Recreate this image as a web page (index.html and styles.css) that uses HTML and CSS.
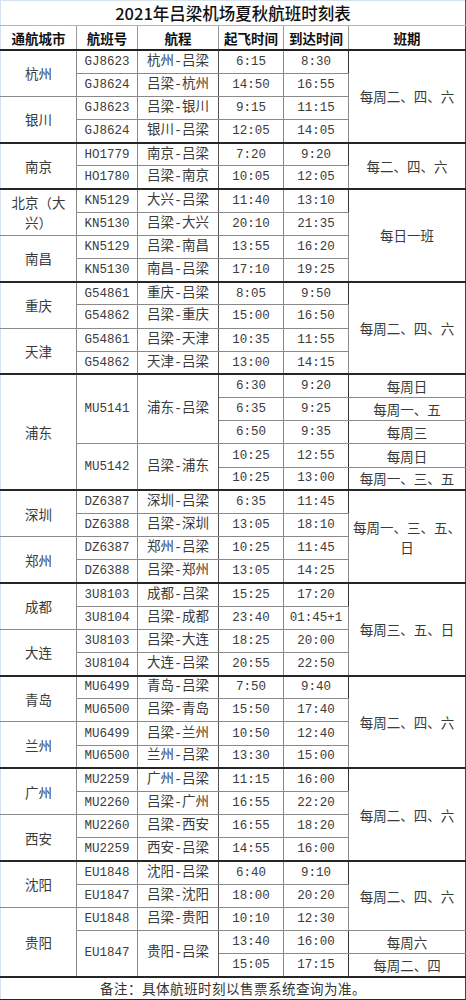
FILE: index.html
```html
<!DOCTYPE html>
<html lang="zh-CN">
<head>
<meta charset="utf-8">
<title>2021年吕梁机场夏秋航班时刻表</title>
<link rel="stylesheet" href="styles.css">
</head>
<body>
<table class="tt">
  <colgroup>
    <col class="c-city"><col class="c-no"><col class="c-route"><col class="c-dep"><col class="c-arr"><col class="c-sch">
  </colgroup>
  <thead>
    <tr class="title"><th colspan="6">2021年吕梁机场夏秋航班时刻表</th></tr>
    <tr class="head"><th>通航城市</th><th>航班号</th><th>航程</th><th>起飞时间</th><th>到达时间</th><th>班期</th></tr>
  </thead>
  <tbody>
    <tr class="gs"><td class="city" rowspan="2">杭州</td><td class="no">GJ8623</td><td class="rt">杭州-吕梁</td><td class="tm">6:15</td><td class="tm">8:30</td><td class="sch" rowspan="4">每周二、四、六</td></tr>
    <tr class="in"><td class="no">GJ8624</td><td class="rt">吕梁-杭州</td><td class="tm">14:50</td><td class="tm">16:55</td></tr>
    <tr class="cs"><td class="city" rowspan="2">银川</td><td class="no">GJ8623</td><td class="rt">吕梁-银川</td><td class="tm">9:15</td><td class="tm">11:15</td></tr>
    <tr class="in"><td class="no">GJ8624</td><td class="rt">银川-吕梁</td><td class="tm">12:05</td><td class="tm">14:05</td></tr>

    <tr class="gs"><td class="city" rowspan="2">南京</td><td class="no">HO1779</td><td class="rt">南京-吕梁</td><td class="tm">7:20</td><td class="tm">9:20</td><td class="sch" rowspan="2">每二、四、六</td></tr>
    <tr class="in"><td class="no">HO1780</td><td class="rt">吕梁-南京</td><td class="tm">10:05</td><td class="tm">12:05</td></tr>

    <tr class="gs"><td class="city two" rowspan="2">北京（大<br>兴）</td><td class="no">KN5129</td><td class="rt">大兴-吕梁</td><td class="tm">11:40</td><td class="tm">13:10</td><td class="sch" rowspan="4">每日一班</td></tr>
    <tr class="in"><td class="no">KN5130</td><td class="rt">吕梁-大兴</td><td class="tm">20:10</td><td class="tm">21:35</td></tr>
    <tr class="cs"><td class="city" rowspan="2">南昌</td><td class="no">KN5129</td><td class="rt">吕梁-南昌</td><td class="tm">13:55</td><td class="tm">16:20</td></tr>
    <tr class="in"><td class="no">KN5130</td><td class="rt">南昌-吕梁</td><td class="tm">17:10</td><td class="tm">19:25</td></tr>

    <tr class="gs"><td class="city" rowspan="2">重庆</td><td class="no">G54861</td><td class="rt">重庆-吕梁</td><td class="tm">8:05</td><td class="tm">9:50</td><td class="sch" rowspan="4">每周二、四、六</td></tr>
    <tr class="in"><td class="no">G54862</td><td class="rt">吕梁-重庆</td><td class="tm">15:00</td><td class="tm">16:50</td></tr>
    <tr class="cs"><td class="city" rowspan="2">天津</td><td class="no">G54861</td><td class="rt">吕梁-天津</td><td class="tm">10:35</td><td class="tm">11:55</td></tr>
    <tr class="in"><td class="no">G54862</td><td class="rt">天津-吕梁</td><td class="tm">13:00</td><td class="tm">14:15</td></tr>

    <tr class="gs"><td class="city" rowspan="5">浦东</td><td class="no" rowspan="3">MU5141</td><td class="rt" rowspan="3">浦东-吕梁</td><td class="tm">6:30</td><td class="tm">9:20</td><td class="sch">每周日</td></tr>
    <tr class="in"><td class="tm">6:35</td><td class="tm">9:25</td><td class="sch">每周一、五</td></tr>
    <tr class="in"><td class="tm">6:50</td><td class="tm">9:35</td><td class="sch">每周三</td></tr>
    <tr class="cs2"><td class="no" rowspan="2">MU5142</td><td class="rt" rowspan="2">吕梁-浦东</td><td class="tm">10:25</td><td class="tm">12:55</td><td class="sch">每周日</td></tr>
    <tr class="in"><td class="tm">10:25</td><td class="tm">13:00</td><td class="sch">每周一、三、五</td></tr>

    <tr class="gs"><td class="city" rowspan="2">深圳</td><td class="no">DZ6387</td><td class="rt">深圳-吕梁</td><td class="tm">6:35</td><td class="tm">11:45</td><td class="sch two" rowspan="4">每周一、三、五、<br>日</td></tr>
    <tr class="in"><td class="no">DZ6388</td><td class="rt">吕梁-深圳</td><td class="tm">13:05</td><td class="tm">18:10</td></tr>
    <tr class="cs"><td class="city" rowspan="2">郑州</td><td class="no">DZ6387</td><td class="rt">郑州-吕梁</td><td class="tm">10:25</td><td class="tm">11:45</td></tr>
    <tr class="in"><td class="no">DZ6388</td><td class="rt">吕梁-郑州</td><td class="tm">13:05</td><td class="tm">14:25</td></tr>

    <tr class="gs"><td class="city" rowspan="2">成都</td><td class="no">3U8103</td><td class="rt">成都-吕梁</td><td class="tm">15:25</td><td class="tm">17:20</td><td class="sch" rowspan="4">每周三、五、日</td></tr>
    <tr class="in"><td class="no">3U8104</td><td class="rt">吕梁-成都</td><td class="tm">23:40</td><td class="tm">01:45+1</td></tr>
    <tr class="cs"><td class="city" rowspan="2">大连</td><td class="no">3U8103</td><td class="rt">吕梁-大连</td><td class="tm">18:25</td><td class="tm">20:00</td></tr>
    <tr class="in"><td class="no">3U8104</td><td class="rt">大连-吕梁</td><td class="tm">20:55</td><td class="tm">22:50</td></tr>

    <tr class="gs"><td class="city" rowspan="2">青岛</td><td class="no">MU6499</td><td class="rt">青岛-吕梁</td><td class="tm">7:50</td><td class="tm">9:40</td><td class="sch" rowspan="4">每周二、四、六</td></tr>
    <tr class="in"><td class="no">MU6500</td><td class="rt">吕梁-青岛</td><td class="tm">15:50</td><td class="tm">17:40</td></tr>
    <tr class="cs"><td class="city" rowspan="2">兰州</td><td class="no">MU6499</td><td class="rt">吕梁-兰州</td><td class="tm">10:50</td><td class="tm">12:40</td></tr>
    <tr class="in"><td class="no">MU6500</td><td class="rt">兰州-吕梁</td><td class="tm">13:30</td><td class="tm">15:00</td></tr>

    <tr class="gs"><td class="city" rowspan="2">广州</td><td class="no">MU2259</td><td class="rt">广州-吕梁</td><td class="tm">11:15</td><td class="tm">16:00</td><td class="sch" rowspan="4">每周二、四、六</td></tr>
    <tr class="in"><td class="no">MU2260</td><td class="rt">吕梁-广州</td><td class="tm">16:55</td><td class="tm">22:20</td></tr>
    <tr class="cs"><td class="city" rowspan="2">西安</td><td class="no">MU2260</td><td class="rt">吕梁-西安</td><td class="tm">16:55</td><td class="tm">18:20</td></tr>
    <tr class="in"><td class="no">MU2259</td><td class="rt">西安-吕梁</td><td class="tm">14:55</td><td class="tm">16:00</td></tr>

    <tr class="gs"><td class="city" rowspan="2">沈阳</td><td class="no">EU1848</td><td class="rt">沈阳-吕梁</td><td class="tm">6:40</td><td class="tm">9:10</td><td class="sch" rowspan="3">每周二、四、六</td></tr>
    <tr class="in"><td class="no">EU1847</td><td class="rt">吕梁-沈阳</td><td class="tm">18:00</td><td class="tm">20:20</td></tr>
    <tr class="cs"><td class="city" rowspan="3">贵阳</td><td class="no">EU1848</td><td class="rt">吕梁-贵阳</td><td class="tm">10:10</td><td class="tm">12:30</td></tr>
    <tr class="cs2"><td class="no" rowspan="2">EU1847</td><td class="rt" rowspan="2">贵阳-吕梁</td><td class="tm">13:40</td><td class="tm">16:00</td><td class="sch">每周六</td></tr>
    <tr class="in"><td class="tm">15:05</td><td class="tm">17:15</td><td class="sch">每周二、四</td></tr>

    <tr class="note"><td colspan="6">备注：具体航班时刻以售票系统查询为准。</td></tr>
  </tbody>
</table>
</body>
</html>
```

FILE: styles.css
```css
html, body {
  margin: 0;
  padding: 0;
  background: #ffffff;
}

body {
  font-family: "Noto Sans CJK SC", sans-serif;
  color: #333333;
}

.tt {
  border-collapse: collapse;
  table-layout: fixed;
  width: 465px;
  border-top: 1px solid #d6e2ee;
  border-left: 1px solid #d6e2ee;
}

.c-city { width: 76px; }
.c-no { width: 61px; }
.c-route { width: 81px; }
.c-dep { width: 65px; }
.c-arr { width: 65px; }
.c-sch { width: 117px; }

.tt th,
.tt td {
  padding: 0;
  text-align: center;
  vertical-align: middle;
  border: 1px solid #8a8a8a;
  white-space: nowrap;
}

.title th {
  height: 24px;
  font-size: 16.5px;
  line-height: 20px;
  font-weight: 500;
  color: #111111;
  border-top: none;
  border-left: none;
  border-right: 1px solid #555555;
  border-bottom: 1px solid #b5b5b5;
}

.head th {
  height: 23px;
  font-size: 13.5px;
  line-height: 18px;
  font-weight: 700;
  color: #111111;
  border-bottom: 2px solid #222222;
  border-left-color: #9a9a9a;
  border-right-color: #9a9a9a;
}

.head th:first-child { border-left: none; }
.head th:last-child { border-right: 1px solid #444444; }

.tt tbody tr { height: 23.175px; }

.tt td {
  font-size: 13.5px;
  line-height: 16px;
  color: #3a3a3a;
}

.tt td.city { border-left: none; }
.tt td.city.two { line-height: 20px; white-space: normal; }

.tt td.no,
.tt td.tm {
  font-family: "Liberation Mono", monospace;
  font-size: 12.5px;
  color: #3c3c3c;
}

.tt td.rt {
  font-family: "Liberation Mono", "Noto Sans CJK SC", monospace;
  border-right-color: #555555;
}

.tt td.tm + td.tm { border-right-color: #333333; }

.tt td.sch {
  border-right: 1px solid #444444;
}

.tt td.sch.two { line-height: 20px; }

.tt tr.in td { border-top-color: #a8a8a8; }
.tt tr.cs td { border-top-color: #555555; }
.tt tr.cs2 td { border-top-color: #444444; }
.tt tr.gs td { border-top: 2px solid #262626; }

.tt tr.note td {
  height: 21px;
  border-top: 2px solid #262626;
  border-bottom: 2px solid #262626;
  border-left: none;
  border-right: 1px solid #444444;
  font-size: 13.5px;
  letter-spacing: 0.5px;
  color: #333333;
}
```
